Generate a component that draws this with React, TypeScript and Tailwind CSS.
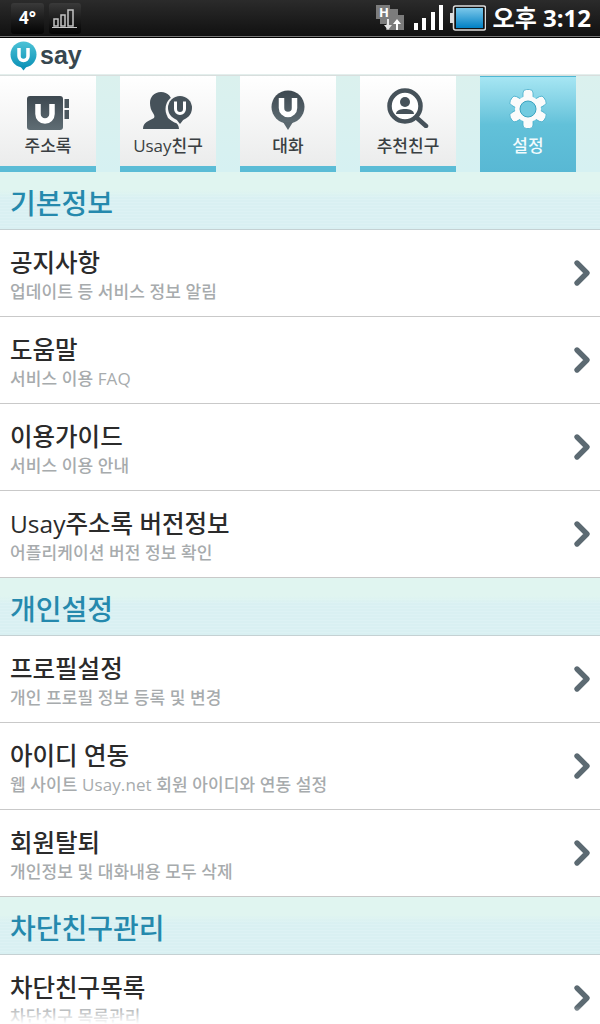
import { ChevronRight } from "lucide-react";

const font = { fontFamily: '"Open Sans", "Noto Sans CJK KR", sans-serif' };

function AddressIcon() {
  return (
    <svg width="44" height="36" viewBox="0 0 44 36">
      <defs>
        <linearGradient id="darkg" x1="0" y1="0" x2="0" y2="1">
          <stop offset="0" stopColor="#3d4850" />
          <stop offset="1" stopColor="#5f6d74" />
        </linearGradient>
      </defs>
      <rect x="1" y="1" width="36" height="34" rx="3" fill="url(#darkg)" />
      <rect x="38.5" y="4" width="4.5" height="9" fill="#4b575e" />
      <rect x="38.5" y="15" width="4.5" height="9" fill="#4b575e" />
      <path d="M12 9v10a7 7 0 0 0 14 0V9" fill="none" stroke="#fff" strokeWidth="5.5" />
    </svg>
  );
}

function FriendIcon() {
  return (
    <svg width="52" height="38" viewBox="0 0 52 38">
      <path d="M1 37c0-7 6-8 11-11 1-2 0-3-1-5-2-3-3-6-3-10C8 5 12 0 19 0c7 0 11 5 11 11 0 4-1 7-3 10-1 2-2 3-1 5 4 3 11 4 11 11z" fill="#46525a" />
      <circle cx="38" cy="17" r="14.5" fill="#f7f7f7" />
      <circle cx="38" cy="16" r="12" fill="#46525a" />
      <path d="M34 27l4 5 4-5z" fill="#46525a" />
      <path d="M33.500 9.500V17a4.500 4.500 0 0 0 9 0V9.500" fill="none" stroke="#fff" strokeWidth="3" />
    </svg>
  );
}

function ChatIcon() {
  return (
    <svg width="34" height="41" viewBox="0 0 34 41">
      <circle cx="17" cy="17" r="16.500" fill="url(#darkg)" />
      <path d="M12 32l5 8 5-8z" fill="#5a676e" />
      <path d="M10.500 8v10a6.500 6.500 0 0 0 13 0V8" fill="none" stroke="#fff" strokeWidth="5.500" />
    </svg>
  );
}

function SearchIcon() {
  return (
    <svg width="42" height="40" viewBox="0 0 42 40">
      <circle cx="18" cy="18" r="15.500" fill="#fff" stroke="#46525a" strokeWidth="4.500" />
      <circle cx="18" cy="14" r="5" fill="#46525a" />
      <path d="M9 26c0-4 5-5 9-5s9 1 9 5z" fill="#46525a" />
      <path d="M30 30l9 8" stroke="#46525a" strokeWidth="4.500" strokeLinecap="round" />
    </svg>
  );
}

function GearIcon() {
  return (
    <svg width="38" height="40" viewBox="0 0 38 40">
      <g fill="#fbfbfb" stroke="#46aecb" strokeWidth="0.800">
        {[0, 60, 120, 180, 240, 300].map((r) => (
          <rect key={r} x="14" y="0.500" width="10" height="12" rx="3.500" transform={`rotate(${r} 19 20)`} />
        ))}
      </g>
      <circle cx="19" cy="20" r="13" fill="#fbfbfb" />
      <circle cx="19" cy="20" r="8" fill="#72cbe0" stroke="#3ba3c0" strokeWidth="1" />
    </svg>
  );
}

function Tab({ label, icon, top }: { label: string; icon: React.ReactNode; top: string }) {
  return (
    <div className="w-24 flex flex-col items-center bg-gradient-to-b from-white to-[#ebecec] border-b-[6px] border-[#5bbcd6]">
      <div className={`h-[54px] flex justify-center ${top}`}>{icon}</div>
      <div className="mt-[4px] text-[17px] leading-[24px] font-medium text-[#3a3f42]">{label}</div>
    </div>
  );
}

function ActiveTab({ label, icon }: { label: string; icon: React.ReactNode }) {
  return (
    <div className="w-24 flex flex-col items-center border-t border-[#4fb8d4] bg-gradient-to-b from-[#a6e6f3] via-[#62c1d9] to-[#58b8d4]">
      <div className="h-[53px] pt-[12px] flex justify-center">{icon}</div>
      <div className="mt-[4px] text-[17px] leading-[24px] font-medium text-[#f2fbfd]">{label}</div>
    </div>
  );
}

function Section({ title }: { title: string }) {
  return (
    <div className="h-[58px] pl-[10px] flex items-center border-b border-[#c5d1d3] bg-[linear-gradient(180deg,#e0f5f0_0px,#e0f5f0_18px,transparent_26px),repeating-linear-gradient(180deg,#ddf2f4_0px,#ddf2f4_1px,#d9f0f2_1px,#d9f0f2_3px)]">
      <span className="text-[28px] leading-[36px] font-medium text-[#2589ad] pt-[5px]">{title}</span>
    </div>
  );
}

function Row({ title, sub }: { title: string; sub: string }) {
  return (
    <div className="h-[87px] pl-[10px] flex items-center justify-between bg-white border-b border-[#c9c9c9]">
      <div className="flex flex-col pt-[3px]">
        <span className="text-[24.5px] leading-[32px] font-medium text-[#2b2b2b]">{title}</span>
        <span className="text-[17px] leading-[22px] tracking-[0.1px] font-medium text-[#a7abad] mt-[2px]">{sub}</span>
      </div>
      <ChevronRight size={40} strokeWidth={3.2} className="text-[#5c6a72] mr-[-2px]" />
    </div>
  );
}

export default function App() {
  return (
    <div className="relative w-[600px] h-[1024px] overflow-hidden bg-white" style={font}>
      <div className="h-[37px] border-b border-[#777] flex items-center justify-between pl-[11px] pr-[9px] bg-gradient-to-b from-[#2b2b2b] to-[#111]">
        <div className="flex gap-[5px]">
          <div className="w-[33px] h-[31px] rounded-[3px] bg-gradient-to-b from-[#3a3a3a] to-[#050505] flex items-center justify-center text-white font-bold text-[17px]">4°</div>
          <div className="w-[32px] h-[31px] rounded-[3px] bg-gradient-to-b from-[#3a3a3a] to-[#050505] flex items-center justify-center">
            <svg width="26" height="22" viewBox="0 0 26 22" fill="none" stroke="#c4c4c4" strokeWidth="1.500">
              <rect x="2" y="12" width="4" height="7" />
              <rect x="9" y="8" width="4" height="11" />
              <rect x="16" y="3" width="5" height="16" />
              <path d="M0 20.500h25" strokeWidth="1" />
            </svg>
          </div>
        </div>
        <div className="flex items-center">
          <svg width="29" height="28" viewBox="0 0 29 28">
            <path d="M0 1h14v4h8v6h6v15H10v-6H4v-5H0z" fill="#7c7c7c" />
            <text x="3" y="13" fontSize="13" fontWeight="700" fill="#fff">H</text>
            <path d="M11 15v6H8l4 5 4-5h-3v-6z" fill="#e5e5e5" />
            <path d="M22 26v-6h3l-4-5-4 5h3v6z" fill="#fff" />
          </svg>
          <svg className="ml-[9px]" width="30" height="26" viewBox="0 0 30 26" fill="#fff">
            <rect x="0" y="18" width="4" height="7" />
            <rect x="8" y="13" width="4" height="12" />
            <rect x="17" y="7" width="4" height="18" />
            <rect x="25" y="0" width="4" height="25" />
          </svg>
          <svg className="ml-[6px]" width="36" height="26" viewBox="0 0 36 26">
            <rect x="0" y="8" width="3" height="10" fill="#ddd" />
            <rect x="3.500" y="1" width="32" height="24" rx="2" fill="#111" stroke="#ddd" strokeWidth="1.500" />
            <defs>
              <linearGradient id="batt" x1="0" y1="0" x2="0" y2="1">
                <stop offset="0" stopColor="#7cc8ea" />
                <stop offset="1" stopColor="#0080c4" />
              </linearGradient>
            </defs>
            <rect x="6" y="3" width="27" height="20" fill="url(#batt)" />
          </svg>
          <span className="ml-[7px] text-white text-[24px] font-bold leading-[30px] whitespace-nowrap">오후 3:12</span>
        </div>
      </div>
      <div className="h-[1px] bg-black" />
      <div className="h-[37px] pl-[10px] flex items-center gap-[3px] border-b border-[#e3eeec]">
        <svg width="27" height="30" viewBox="0 0 27 30">
          <defs>
            <linearGradient id="logo" x1="0" y1="0" x2="0" y2="1">
              <stop offset="0" stopColor="#4cc2d6" />
              <stop offset="1" stopColor="#0d93b8" />
            </linearGradient>
          </defs>
          <circle cx="13.500" cy="13.500" r="13" fill="url(#logo)" />
          <path d="M10 25l3.500 4.500 3.500-4.500z" fill="#0d93b8" />
          <path d="M9 7v8a4.500 4.500 0 0 0 9 0V7" fill="none" stroke="#fff" strokeWidth="3.500" />
        </svg>
        <span className="text-[25px] font-bold leading-[30px] text-[#37474f] pb-[3px]" style={{ fontFamily: '"Liberation Sans", sans-serif' }}>say</span>
      </div>
      <div className="h-[97px] border-t border-[#d8dedd] flex gap-6 bg-gradient-to-b from-[#dbf1ee] to-[#d6f1f2]">
        <Tab label="주소록" icon={<AddressIcon />} top="pt-[19px]" />
        <Tab label="Usay친구" icon={<FriendIcon />} top="pt-[16px]" />
        <Tab label="대화" icon={<ChatIcon />} top="pt-[14px]" />
        <Tab label="추천친구" icon={<SearchIcon />} top="pt-[12px]" />
        <ActiveTab label="설정" icon={<GearIcon />} />
      </div>
      <Section title="기본정보" />
      <Row title="공지사항" sub="업데이트 등 서비스 정보 알림" />
      <Row title="도움말" sub="서비스 이용 FAQ" />
      <Row title="이용가이드" sub="서비스 이용 안내" />
      <Row title="Usay주소록 버전정보" sub="어플리케이션 버전 정보 확인" />
      <Section title="개인설정" />
      <Row title="프로필설정" sub="개인 프로필 정보 등록 및 변경" />
      <Row title="아이디 연동" sub="웹 사이트 Usay.net 회원 아이디와 연동 설정" />
      <Row title="회원탈퇴" sub="개인정보 및 대화내용 모두 삭제" />
      <Section title="차단친구관리" />
      <Row title="차단친구목록" sub="차단친구 목록관리" />
      <div className="absolute left-0 right-0 bottom-0 h-[18px] bg-gradient-to-b from-white/0 to-white" />
    </div>
  );
}
